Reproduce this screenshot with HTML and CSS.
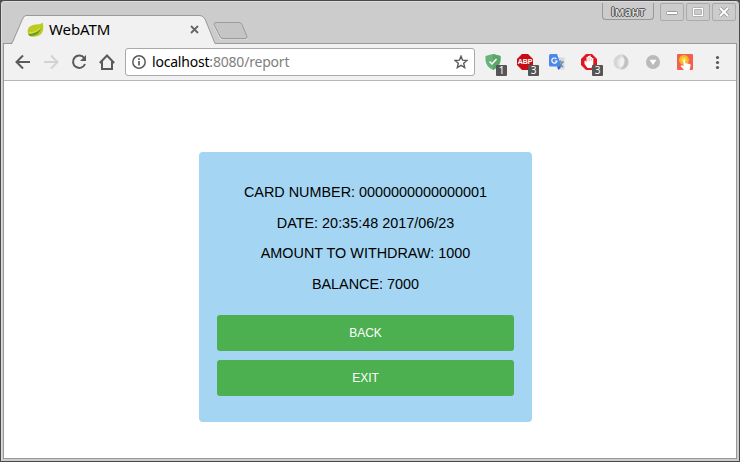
FILE: index.html
```
<!DOCTYPE html>
<html lang="en">
<head>
<meta charset="utf-8">
<title>WebATM</title>
<link rel="stylesheet" href="styles.css">
</head>
<body>
<div class="window">
  <header class="tabstrip">
    <div class="tab">
      <svg class="tab-shape" width="207" height="31" viewBox="0 0 207 31"><path d="M0 30.500C2 30 2 29 3 27L12 5Q14 .5 16 .5H190Q193 .5 195 4L205 28.500L207 31V31H0z" fill="#f1f1f1"/><path d="M0 28.500Q2 28.500 3 26L12.500 4Q14 .5 16 .5H190Q193 .5 195 4L205 28.500H207" fill="none" stroke="#999"/></svg>
      <svg class="leaf" width="17" height="16" viewBox="0 0 17 16"><path d="M15.500.5C13 3 10 2 6 3C1 4.500 0 8 1 12C2 15 7 15.500 11 14C17 12 17 5 15.500.5z" fill="#bdcb20"/><path d="M1 12C6 12 12 10 14 6C13 11 9 14 3 14z" fill="#659735"/><path d="M2 11C6 11 10 9 13 6" fill="none" stroke="#dce451"/></svg>
      <span class="tab-title">WebATM</span>
      <svg class="tab-close" width="9" height="9" viewBox="0 0 9 9"><path d="M1 1l7 7M8 1l-7 7" stroke="#666" stroke-width="1.800"/></svg>
    </div>
    <svg class="new-tab" width="36" height="18" viewBox="0 0 36 18"><path d="M3 1H26Q28 1 29 3L34 15Q34.500 17 32 17H10Q8 17 7 15L1 3Q1 1 3 1z" fill="#c4c4c4" stroke="#e2e2e2" transform="translate(0 1)"/><path d="M3 .5H26Q28 .5 29 2.500L34 14.500Q34.500 16.500 32 16.500H10Q8 16.500 7 14.500L1 2.500Q1 .5 3 .5z" fill="#c5c5c5" stroke="#9b9b9b"/></svg>
    <div class="controls">
      <span class="user">Імант</span>
      <span class="control"><svg width="12" height="10" viewBox="0 0 12 10"><rect x=".5" y="4.500" width="11" height="3" rx="1" fill="#fff" stroke="#999"/></svg></span>
      <span class="control"><svg width="12" height="10" viewBox="0 0 12 10"><rect x="1.500" y="1.500" width="9" height="7" fill="none" stroke="#999" stroke-width="3" rx="1"/><rect x="1.500" y="1.500" width="9" height="7" fill="none" stroke="#fff" stroke-width="1.500"/></svg></span>
      <span class="control"><svg width="12" height="10" viewBox="0 0 12 10"><path d="M2 1l8 8M10 1L2 9" stroke="#999" stroke-width="3.600"/><path d="M2 1l8 8M10 1L2 9" stroke="#fff" stroke-width="1.800"/></svg></span>
    </div>
  </header>
  <main class="frame">
    <nav class="toolbar">
      <div class="nav-buttons">
        <svg viewBox="0 0 16 16"><path d="M15 8H2M8 1.500L1.500 8L8 14.500" fill="none" stroke="#5a5a5a" stroke-width="2"/></svg>
        <svg viewBox="0 0 16 16"><path d="M1 8H14M8 1.500L14.500 8L8 14.500" fill="none" stroke="#d2d2d2" stroke-width="2"/></svg>
        <svg viewBox="0 0 16 16"><path d="M13.200 4A6.200 6.200 0 1 0 14 10" fill="none" stroke="#5a5a5a" stroke-width="2"/><path d="M15 1V7H9z" fill="#5a5a5a"/></svg>
        <svg viewBox="0 0 16 16"><path d="M.8 9L8 1.500L15.200 9M3 7.500V15H13V7.500" fill="none" stroke="#5a5a5a" stroke-width="2"/></svg>
      </div>
      <div class="omnibox">
        <svg class="info" width="14" height="14" viewBox="0 0 14 14"><circle cx="7" cy="7" r="6.200" fill="none" stroke="#5a5a5a" stroke-width="1.500"/><path d="M7 6V10.500M7 3.300V5" stroke="#5a5a5a" stroke-width="1.700"/></svg>
        <span class="url"><span class="host">localhost</span>:8080/report</span>
        <svg class="star" width="14" height="14" viewBox="0 0 14 14"><path d="M7 1.200L8.600 5.200L13 5.500L9.700 8.300L10.700 12.600L7 10.300L3.300 12.600L4.300 8.300L1 5.500L5.400 5.200z" fill="none" stroke="#5a5a5a" stroke-width="1.400"/></svg>
      </div>
      <div class="extensions">
        <span class="extension"><svg viewBox="0 0 16 16"><path d="M8 0L15.500 2V6Q15 13 8 16Q1 13 .5 6V2z" fill="#67b279"/><path d="M8 0L15.500 2V6Q15 13 8 16z" fill="#5aa669"/><path d="M4.500 7.500L7 10L11.500 5" fill="none" stroke="#fff" stroke-width="1.500"/></svg><b class="badge">1</b></span>
        <span class="extension"><svg viewBox="0 0 16 16"><path d="M5 0H11L16 5V11L11 16H5L0 11V5z" fill="#c70d12"/></svg><b class="abp">ABP</b><b class="badge">3</b></span>
        <span class="extension"><svg viewBox="0 0 16 16"><path d="M6 3.500H15.500V15.500H9z" fill="#d7d9dc"/><path d="M8.500 8H15M11.700 6.500V8M13.500 8Q12.500 11 9.500 13M10.500 9.500L14 13" fill="none" stroke="#67839a" stroke-width="1.100"/><path d="M1.500 0H8L12.500 12.500H1.500Q0 12.500 0 11V1.500Q0 0 1.500 0z" fill="#4b88e8"/><path d="M8 12.500H12.500L9.500 16z" fill="#315fc0"/><path d="M7.500 5A2.600 2.600 0 1 0 8 7H5.800" fill="none" stroke="#fff" stroke-width="1.200"/></svg></span>
        <span class="extension"><svg viewBox="0 0 16 16"><path d="M5 0H11L16 5V11L11 16H5L0 11V5z" fill="#e3161d"/><path d="M3.500 7L4.500 6.500L5.500 8V3H6.800V2H8.300V1.500H9.700V3H11V4H12.300V10L10.500 14H6.500L3.500 10z" fill="#fff"/><path d="M7 3V7M8.700 3V7M10.400 4V7" stroke="#eb8a8c" stroke-width=".5"/></svg><b class="badge">3</b></span>
        <span class="extension"><svg viewBox="0 0 16 16"><circle cx="8" cy="8" r="7.500" fill="#d6d6d6"/><path d="M8 .5A7.500 7.500 0 0 1 8 15.500Q13 11 11 4Q10 1 8 .5z" fill="#c2c2c2"/><ellipse cx="8" cy="8" rx="3.200" ry="4.800" fill="#f1f1f1" transform="rotate(15 8 8)"/><path d="M9.500 1.500Q4 7 6.500 15" fill="none" stroke="#e4e4e4" stroke-width="1.400"/></svg></span>
        <span class="extension"><svg viewBox="0 0 16 16"><circle cx="8" cy="8" r="7" fill="#bababa"/><path d="M4.500 5.800H11.500L8 11z" fill="#fff"/></svg></span>
        <span class="extension"><svg viewBox="0 0 16 16"><rect width="16" height="16" rx="1" fill="#f45f4f"/><circle cx="7" cy="6" r="5" fill="#f6b52d"/><circle cx="7" cy="6" r="2.700" fill="#f9d53c"/><path d="M6.500 5.500Q7.500 4.800 8 6V9L13 10Q14 10.500 13.500 12L12.500 16H7L3.500 12Q4 10.500 6.500 12z" fill="#fff"/></svg></span>
        <span class="extension"><svg viewBox="0 0 16 16"><g fill="#5a5a5a"><circle cx="8.500" cy="3.500" r="1.600"/><circle cx="8.500" cy="8.500" r="1.600"/><circle cx="8.500" cy="13.500" r="1.600"/></g></svg></span>
      </div>
    </nav>
    <section class="page">
      <div class="card">
        <p>CARD NUMBER: 0000000000000001</p>
        <p>DATE: 20:35:48 2017/06/23</p>
        <p>AMOUNT TO WITHDRAW: 1000</p>
        <p>BALANCE: 7000</p>
        <button class="button" type="button">BACK</button>
        <button class="button" type="button">EXIT</button>
      </div>
    </section>
  </main>
</div>
</body>
</html>
```
FILE: styles.css
```
* { box-sizing: border-box; }
body { margin: 0; background: #4c494b; overflow: hidden; }
svg { display: block; flex: none; }
.window {
  display: flex;
  flex-direction: column;
  width: 740px;
  height: 462px;
  border: 1px solid #4b4849;
  border-radius: 4px 4px 0 0;
  background: #ccc;
  box-shadow: inset 1px 1px #ddd;
  font-family: "Noto Sans", sans-serif;
}
.tabstrip { display: flex; height: 42px; padding: 0 3px 0 9px; align-items: flex-start; }
.tab {
  position: relative;
  z-index: 1;
  display: flex;
  align-items: center;
  width: 207px;
  height: 29px;
  margin-top: 14px;
  padding: 0 18px 0 17px;
}
.tab-shape { position: absolute; left: 0; top: 0; }
.leaf, .tab-title, .tab-close { position: relative; }
.tab-title { margin: -1px 0 0 5px; font-size: 15px; line-height: 20px; letter-spacing: -.1px; color: #000; }
.tab-close { margin-left: auto; }
.new-tab { margin: 21px 0 0 -4px; }
.controls { display: flex; gap: 2px; margin: 2px 0 0 auto; }
.user {
  width: 52px;
  height: 17px;
  margin-right: 4px;
  border: 1px solid #999;
  border-top: 0;
  border-radius: 0 0 4px 4px;
  font-size: 12px;
  font-weight: 600;
  line-height: 18px;
  text-align: center;
  color: #ddd;
  text-shadow: 1px 0 #555, -1px 0 #555, 0 1px #555, 0 -1px #555;
}
.control {
  display: flex;
  align-items: center;
  justify-content: center;
  width: 24px;
  height: 18px;
  border: 1px solid #aaa;
  border-radius: 2px;
}
.frame {
  flex: 1;
  display: flex;
  flex-direction: column;
  margin: 0 2px 2px;
  border: 1px solid #999;
  background: #fff;
}
.toolbar {
  display: flex;
  align-items: center;
  height: 37px;
  padding-left: 11px;
  border-bottom: 1px solid #b6b6b6;
  background: #f1f1f1;
}
.nav-buttons { display: flex; gap: 12px; width: 110px; }
.nav-buttons svg { width: 16px; height: 16px; }
.omnibox {
  display: flex;
  align-items: center;
  width: 350px;
  height: 28px;
  padding: 0 6px;
  border: 1px solid #aaa;
  border-radius: 3px;
  background: #fff;
}
.url { margin: -1px 0 0 6px; font-size: 14px; letter-spacing: -.2px; color: #808080; white-space: nowrap; }
.host { color: #000; }
.star { margin-left: auto; }
.extensions { display: flex; gap: 16px; margin-left: 10px; }
.extension { position: relative; width: 16px; height: 16px; }
.extension svg { width: 16px; height: 16px; }
.abp {
  position: absolute;
  left: 0;
  top: 3px;
  width: 16px;
  color: #fff;
  font: bold 7px/10px "Liberation Sans", sans-serif;
  letter-spacing: -.1px;
  text-align: center;
}
.badge {
  position: absolute;
  left: 11px;
  top: 11px;
  width: 11px;
  height: 11px;
  border-radius: 1px;
  background: #555;
  color: #fff;
  font: 10px/11px "Noto Sans", sans-serif;
  text-align: center;
}
.page { flex: 1; font-family: "Liberation Sans", sans-serif; }
.card {
  display: flex;
  flex-direction: column;
  width: 333px;
  height: 270px;
  margin: 71px 0 0 195px;
  padding: 32px 18px 0;
  border-radius: 4px;
  background: #a4d6f3;
}
.card p { margin: 0 0 13.670px; font-size: 14.400px; line-height: 17px; text-align: center; color: #000; white-space: nowrap; }
.button {
  width: 297px;
  height: 36px;
  margin: 9px 0 0;
  padding: 0;
  border: 0;
  border-radius: 3px;
  background: #4caf50;
  color: #fff;
  font: 12px "Liberation Sans", sans-serif;
}
.card p + .button { margin-top: 8px; }
```
